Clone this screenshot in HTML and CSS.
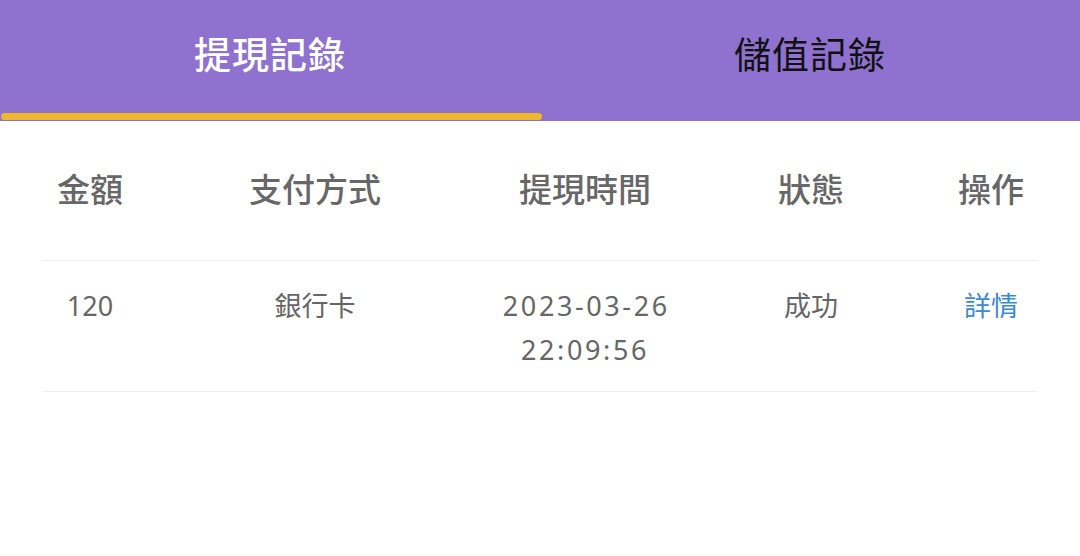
FILE: index.html
```html
<!DOCTYPE html>
<html lang="zh-Hant">
<head>
<meta charset="utf-8">
<link rel="stylesheet" href="styles.css">
</head>
<body>
<div class="tabs">
  <div class="tab active"><span class="tab-label">提現記錄</span><span class="tab-bar"></span></div>
  <div class="tab"><span class="tab-label">儲值記錄</span></div>
</div>
<div class="table">
  <div class="row head">
    <div class="cell c1">金額</div>
    <div class="cell c2">支付方式</div>
    <div class="cell c3">提現時間</div>
    <div class="cell c4">狀態</div>
    <div class="cell c5">操作</div>
  </div>
  <div class="row body">
    <div class="cell c1">120</div>
    <div class="cell c2">銀行卡</div>
    <div class="cell c3 date">2023-03-26<br>22:09:56</div>
    <div class="cell c4">成功</div>
    <div class="cell c5 link">詳情</div>
  </div>
</div>
</body>
</html>
```

FILE: styles.css
```css
html, body {
  margin: 0;
  padding: 0;
  background: #ffffff;
}
body {
  width: 1080px;
  height: 556px;
  overflow: hidden;
  font-family: "Noto Sans", "Noto Sans CJK TC", sans-serif;
}
.tabs {
  display: flex;
  height: 121px;
  background: #8f71cf;
}
.tab {
  flex: 1;
  position: relative;
  display: flex;
  justify-content: center;
  padding-top: 27px;
  box-sizing: border-box;
}
.tab-label {
  font-family: "Noto Sans CJK TC", sans-serif;
  font-size: 37px;
  line-height: 52px;
  color: #111111;
  letter-spacing: 1px;
}
.tab.active .tab-label {
  color: #ffffff;
  font-weight: 500;
}
.tab-bar {
  position: absolute;
  left: 1px;
  right: -2px;
  bottom: 1px;
  height: 7px;
  border-radius: 4px;
  background: #f0b72a;
}
.table {
  margin: 0 43px;
  width: 994px;
}
.row {
  display: grid;
  grid-template-columns: 94px 356px 184px 268px 92px;
  border-bottom: 1px solid #eeeeee;
}
.row.head {
  height: 140px;
  align-items: center;
  padding-bottom: 6px;
  box-sizing: border-box;
}
.row.head .cell {
  font-family: "Noto Sans CJK TC", sans-serif;
  font-size: 33px;
  font-weight: 500;
  color: #676767;
}
.row.body {
  padding-top: 23px;
  height: 131px;
  box-sizing: border-box;
  align-items: start;
}
.cell {
  text-align: center;
  font-size: 27px;
  line-height: 44px;
  color: #666666;
}
.date {
  letter-spacing: 2.6px;
  text-indent: 2.6px;
}
.link {
  color: #3a8ad4;
}
```
